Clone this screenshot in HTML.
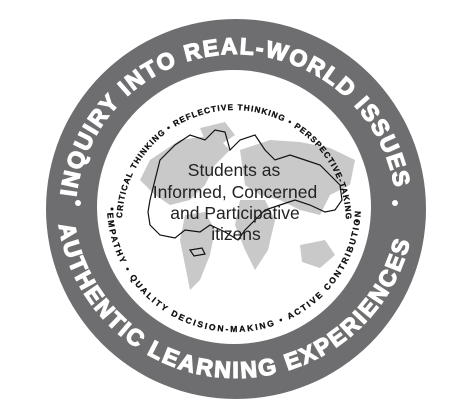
<!DOCTYPE html>
<html><head><style>
html,body{margin:0;padding:0;background:#fff;width:476px;height:410px;overflow:hidden}
svg{display:block}
</style></head><body>
<svg width="476" height="410" viewBox="0 0 476 410" xmlns="http://www.w3.org/2000/svg">
<defs>
<path id="ot" d="M 75 215 A 161 161 0 1 1 397 215"/>
<path id="ob" d="M 57 199 A 179 179 0 0 0 415 199"/>
<path id="it" d="M 122 222 A 112 112 0 1 1 346 222"/>
<path id="ib" d="M 107 205 A 127 127 0 0 0 361 205"/>
</defs>
<circle cx="236" cy="209" r="190" fill="#6e6e70"/>
<circle cx="234" cy="207" r="137" fill="#fff"/>
<g fill="#c9c9c9">
<path d="M150 160 L180 140 L215 135 L230 150 L215 165 L205 185 L190 200 L170 205 L155 195 L140 180 Z"/>
<path d="M185 215 L205 212 L215 230 L210 255 L200 280 L190 290 L185 265 L180 240 Z"/>
<path d="M240 150 L270 140 L300 142 L330 148 L355 160 L350 185 L330 195 L320 215 L300 210 L280 200 L260 195 L245 185 Z"/>
<path d="M240 200 L265 200 L275 220 L268 250 L255 270 L245 250 L235 225 Z"/>
<path d="M300 245 L325 240 L335 255 L320 268 L302 262 Z"/>
<path d="M200 128 L225 122 L235 135 L220 145 L205 140 Z"/>
</g>
<g fill="none" stroke="#111" stroke-width="1.2">
<path d="M150 200 L160 160 L175 145 L190 135 L205 140 L215 130 L225 132 L230 150 L240 140 L255 135 L265 150 L275 160 L290 155 L305 160 L320 165 L330 175 L340 185 L342 200 L335 210 L325 212 L310 205 L295 200 L280 205 L265 210 L255 220 L245 230 L238 240 L225 232 L210 225 L200 232 L185 230 L175 238 L160 235 L150 225 L148 212 Z"/>
<path d="M190 250 L202 248 L205 254 L194 256 Z"/>
</g>
<g font-family="'Liberation Sans',sans-serif" font-weight="bold">
<text font-size="23" fill="#fff" stroke="#fff" stroke-width="1.3" letter-spacing="2"><textPath href="#ot" startOffset="18" textLength="462" lengthAdjust="spacing">INQUIRY INTO REAL-WORLD ISSUES</textPath></text>
<text font-size="23" fill="#fff" stroke="#fff" stroke-width="1.3" letter-spacing="2"><textPath href="#ob" startOffset="26" textLength="495" lengthAdjust="spacing">AUTHENTIC LEARNING EXPERIENCES</textPath></text>
<circle cx="78" cy="203" r="3" fill="#fff"/>
<circle cx="395" cy="203" r="3" fill="#fff"/>
<text font-size="8.2" fill="#111" stroke="#111" stroke-width="0.3" letter-spacing="0.4"><textPath href="#it" startOffset="4" textLength="345" lengthAdjust="spacing">CRITICAL THINKING • REFLECTIVE THINKING • PERSPECTIVE-TAKING</textPath></text>
<text font-size="8.5" fill="#111" stroke="#111" stroke-width="0.3" letter-spacing="0.5"><textPath href="#ib" startOffset="8" textLength="385" lengthAdjust="spacing">EMPATHY • QUALITY DECISION-MAKING • ACTIVE CONTRIBUTION</textPath></text>
<circle cx="112" cy="209" r="1.5" fill="#111"/>
<circle cx="357" cy="221" r="1.5" fill="#111"/>
</g>
<g font-family="'Liberation Sans',sans-serif" font-size="17.5" fill="#222" text-anchor="middle">
<text x="234" y="176">Students as</text>
<text x="235" y="198">Informed, Concerned</text>
<text x="235" y="219">and Participative</text>
<text x="236" y="240">itizens</text>
</g>
</svg>
</body></html>
